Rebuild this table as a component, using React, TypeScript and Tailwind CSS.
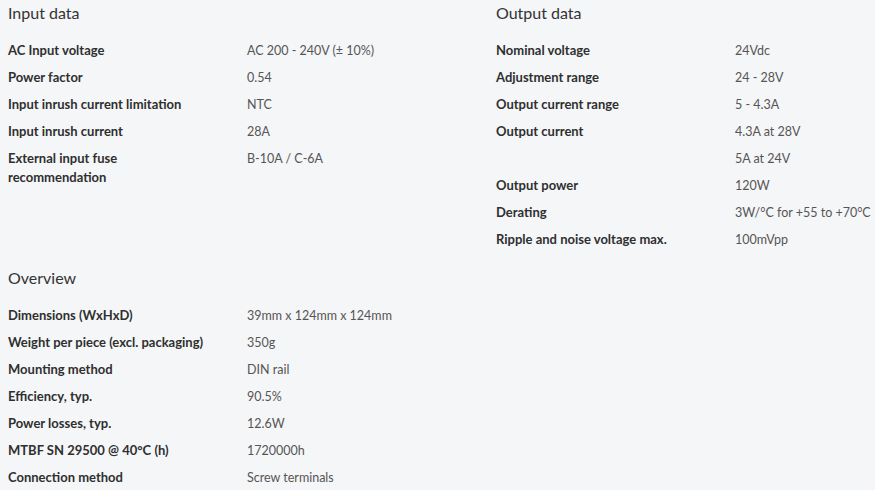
const inputData: [string, string][] = [
  ['AC Input voltage', 'AC 200 - 240V (± 10%)'],
  ['Power factor', '0.54'],
  ['Input inrush current limitation', 'NTC'],
  ['Input inrush current', '28A'],
  ['External input fuse recommendation', 'B-10A / C-6A'],
];

const outputData: [string, string][] = [
  ['Nominal voltage', '24Vdc'],
  ['Adjustment range', '24 - 28V'],
  ['Output current range', '5 - 4.3A'],
  ['Output current', '4.3A at 28V'],
  ['', '5A at 24V'],
  ['Output power', '120W'],
  ['Derating', '3W/°C for +55 to +70°C'],
  ['Ripple and noise voltage max.', '100mVpp'],
];

const overview: [string, string][] = [
  ['Dimensions (WxHxD)', '39mm x 124mm x 124mm'],
  ['Weight per piece (excl. packaging)', '350g'],
  ['Mounting method', 'DIN rail'],
  ['Efficiency, typ.', '90.5%'],
  ['Power losses, typ.', '12.6W'],
  ['MTBF SN 29500 @ 40°C (h)', '1720000h'],
  ['Connection method', 'Screw terminals'],
];

const SpecSection = ({ title, rows }: { title: string; rows: [string, string][] }) => (
  <div>
    <h3 className="text-[16px] leading-[25px] text-[#333333] mb-[12px]">{title}</h3>
    <div>
      {rows.map(([label, value], i) => (
        <div key={i} className="flex py-[4px] leading-[19px]">
          <div className="w-[239px] shrink-0 pr-[30px] text-[13px] font-bold text-[#2f2f2f]">{label}</div>
          <div className="text-[12.5px] text-[#555555] whitespace-nowrap">{value}</div>
        </div>
      ))}
    </div>
  </div>
);

export default function App() {
  return (
    <div
      className="w-[875px] h-[490px] overflow-hidden bg-[#f5f6f8] pl-2"
      style={{ fontFamily: 'Lato, "Open Sans", sans-serif' }}
    >
      <div className="grid grid-cols-[488px_1fr] gap-y-[12px]">
        <SpecSection title="Input data" rows={inputData} />
        <SpecSection title="Output data" rows={outputData} />
        <SpecSection title="Overview" rows={overview} />
      </div>
    </div>
  );
}
